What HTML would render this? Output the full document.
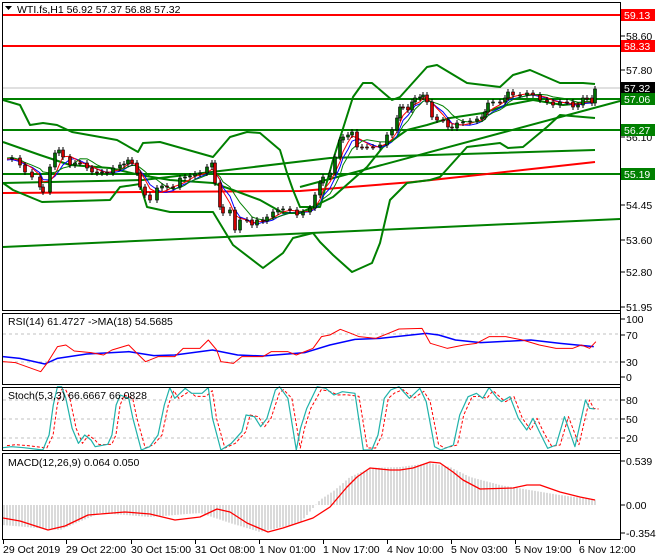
<!DOCTYPE html>
<html><head><meta charset="utf-8"><style>
html,body{margin:0;padding:0;background:#fff;width:660px;height:560px;overflow:hidden}
svg{display:block;font-family:"Liberation Sans",sans-serif;font-size:10.5px}
</style></head><body>
<svg id="s" width="660" height="560" viewBox="0 0 660 560" xmlns="http://www.w3.org/2000/svg">
<rect width="660" height="560" fill="#fff"/>
<g id="g"></g>
<g fill="none" stroke="#000" stroke-width="1">
<rect x="2.5" y="2.5" width="618" height="308"/>
<rect x="2.5" y="313.5" width="618" height="71"/>
<rect x="2.5" y="387.5" width="618" height="63"/>
<rect x="2.5" y="453.5" width="618" height="86"/>
</g>
<g fill="#000">
<text x="17" y="13">WTI.fs,H1  56.92 57.37 56.88 57.32</text>
<path d="M5 6h7l-3.5 4z"/>
<text x="8" y="325">RSI(14) 61.4727  -&gt;MA(18) 54.5685</text>
<text x="8" y="399">Stoch(5,3,3) 66.6667 66.0828</text>
<text x="8" y="466">MACD(12,26,9) 0.064 0.050</text>
</g>
<g id="ax" fill="#000"></g>
</svg>
<script>
var g=document.getElementById('g'),ax=document.getElementById('ax'),NS='http://www.w3.org/2000/svg';
function el(p,t,a){var e=document.createElementNS(NS,t);for(var k in a)e.setAttribute(k,a[k]);p.appendChild(e);return e}
function pl(pts,c,w,d){var a={points:pts.map(function(p){return p[0]+','+p[1]}).join(' '),fill:'none',stroke:c,'stroke-width':w||1,'stroke-linejoin':'round'};if(d)a['stroke-dasharray']=d;return el(g,'polyline',a)}
function ln(x1,y1,x2,y2,c,w,d){var a={x1:x1,y1:y1,x2:x2,y2:y2,stroke:c,'stroke-width':w||1};if(d)a['stroke-dasharray']=d;el(g,'line',a)}
var G='#008000',R='#ff0000';
ln(3,15,620,15,R,2);ln(3,46,620,46,R,2);ln(3,88,620,88,'#c0c0c0',1);
ln(3,99,620,99,G,2);ln(3,130,620,130,G,2);ln(3,174,620,174,G,2);
pl([[3,247],[620,219]],G,2);
pl([[3,183],[143,180],[330,158],[595,150]],G,2);
pl([[300,187],[620,101]],G,2);
pl([[3,193],[300,191],[413,182],[487,174],[595,162]],R,2);
pl([[3,100],[20,105],[30,125],[43,123],[57,125],[72,132],[117,140],[138,152],[143,143],[160,142],[213,157],[230,137],[247,132],[260,133],[280,150],[287,173],[293,190],[300,207],[320,207],[333,160],[353,97],[363,83],[372,83],[392,100],[400,97],[427,67],[437,65],[467,83],[500,87],[513,75],[530,70],[560,83],[583,83],[595,84]],G,2);
pl([[3,142],[40,155],[70,165],[110,168],[140,175],[170,180],[213,183],[233,190],[260,200],[283,213],[300,213],[333,197],[367,167],[383,147],[407,130],[427,125],[450,118],[483,113],[507,105],[533,100],[563,105],[595,102]],G,2);
pl([[3,183],[13,190],[42,202],[110,200],[120,187],[140,184],[147,207],[170,212],[213,212],[233,245],[263,268],[283,253],[293,238],[313,233],[320,242],[333,255],[352,272],[372,263],[380,243],[390,200],[407,183],[430,180],[440,177],[467,147],[500,143],[508,148],[523,147],[547,127],[560,115],[583,117],[595,118]],G,2);
var P=[[7,159],[12,158],[20,165],[25,172],[32,177],[40,187],[43,192],[50,167],[55,153],[59,150],[63,157],[70,165],[75,163],[80,163],[87,168],[92,172],[97,173],[102,172],[107,173],[113,168],[120,165],[124,164],[128,160],[132,163],[137,173],[140,187],[145,195],[150,200],[157,188],[162,186],[167,187],[173,187],[180,178],[185,177],[190,176],[195,174],[200,173],[207,167],[212,163],[215,183],[220,207],[223,213],[230,210],[235,230],[240,220],[247,220],[252,225],[257,220],[263,221],[267,217],[273,212],[278,210],[283,209],[290,210],[297,215],[303,212],[310,208],[315,195],[320,183],[323,177],[330,173],[335,157],[340,140],[343,137],[348,135],[352,132],[357,147],[362,147],[367,147],[373,147],[380,145],[387,135],[392,130],[397,118],[400,107],[403,107],[408,110],[412,102],[415,98],[420,97],[423,95],[427,102],[432,117],[437,120],[443,120],[448,127],[452,128],[457,123],[463,122],[470,121],[477,119],[482,117],[485,112],[488,103],[493,102],[500,102],[505,98],[508,92],[513,95],[520,95],[527,93],[533,95],[540,100],[547,102],[553,105],[560,102],[567,102],[573,107],[578,105],[583,98],[587,98],[592,103],[595,89]];
function shift(a,dy,k){var o=[];for(var i=0;i<a.length;i++){var s=0,n=0;for(var j=Math.max(0,i-k);j<=i;j++){s+=a[j][1];n++}o.push([a[i][0],s/n+dy])}return o}
pl(shift(P,1,4),'#0000ff',1);pl(shift(P,0,3),R,1);pl(shift(P,-1,6),G,1);
for(var i=1;i<P.length;i++){var x=P[i][0],o=P[i-1][1],c=P[i][1],t=Math.min(o,c),b=Math.max(o,c);
ln(x,t-3,x,b+3,'#000',1);
el(g,'rect',{x:x-1.5,y:t,width:3,height:Math.max(b-t,1),fill:c<o?'#007000':'#d00000',stroke:'#000','stroke-width':0.6});}
ln(3,334,620,334,'#c0c0c0',1,'3,3');ln(3,362,620,362,'#c0c0c0',1,'3,3');
function cv(a,ox,oy){return a.map(function(p){return [p[0]*0.419+3,oy+p[1]/3]})}
pl(cv([[0,200],[40,205],[100,222],[130,205],[200,192],[300,185],[360,197],[410,195],[500,180],[560,195],[620,198],[720,188],[780,165],[840,148],[900,145],[1010,130],[1040,135],[1080,150],[1140,158],[1260,150],[1330,160],[1410,170]],0,290),'#0000ff',1.5);
pl(cv([[0,215],[30,218],[90,245],[105,220],[130,170],[150,165],[170,183],[210,188],[240,195],[260,180],[300,165],[320,190],[340,215],[370,200],[410,200],[430,175],[470,175],[490,150],[510,180],[520,215],[550,220],[570,200],[620,200],[640,185],[680,185],[700,195],[740,175],[760,140],[780,135],[805,118],[830,130],[850,140],[890,145],[920,130],[945,117],[1000,115],[1020,160],[1060,175],[1100,165],[1130,160],[1160,140],[1200,140],[1240,150],[1280,165],[1320,175],[1360,175],[1380,165],[1400,175],[1415,155]],0,290),R,1);
ln(3,400,620,400,'#c0c0c0',1,'3,3');ln(3,419,620,419,'#c0c0c0',1,'3,3');ln(3,438,620,438,'#c0c0c0',1,'3,3');
var S=cv([[0,188],[20,185],[50,188],[95,195],[110,150],[120,60],[130,5],[140,5],[150,40],[165,130],[180,175],[195,150],[210,165],[220,185],[250,178],[260,150],[270,60],[280,30],[300,40],[310,100],[330,195],[350,185],[370,150],[385,60],[398,8],[410,40],[435,10],[450,25],[475,25],[490,8],[500,100],[520,195],[545,175],[570,140],[580,90],[600,95],[615,125],[630,100],[650,15],[660,5],[680,40],[700,195],[710,130],[725,70],[750,5],[770,10],[790,30],[810,20],[840,25],[860,195],[880,195],[895,150],[910,40],[925,15],[945,5],[970,40],[995,10],[1010,50],[1030,185],[1045,195],[1075,180],[1090,90],[1110,35],[1130,25],[1145,40],[1160,8],[1180,40],[1190,50],[1210,35],[1230,100],[1250,135],[1265,100],[1280,140],[1300,190],[1320,180],[1340,95],[1365,185],[1390,45],[1400,70],[1412,72]],0,385);
pl(S.map(function(p){return [p[0]+4,p[1]+(p[1]<395?3:p[1]>445?-2:0)]}),R,1,'3,2');
pl(S,'#20b2aa',1.2);
var hz=[[3,20],[60,25],[100,8],[150,12],[200,8],[230,18],[260,27],[300,18],[320,-5],[335,-15],[350,-28],[370,-37],[400,-38],[430,-42],[450,-38],[470,-28],[500,-20],[530,-15],[560,-10],[597,-5]];
function hv(x){for(var i=1;i<hz.length;i++)if(x<=hz[i][0]){var a=hz[i-1],b=hz[i];return a[1]+(b[1]-a[1])*(x-a[0])/(b[0]-a[0])}return -5}
for(var x=4;x<=597;x+=3){var v=hv(x);ln(x,505,x,505+v,'#b4b4b4',1)}
pl([[3,518],[20,521],[48,530],[65,526],[88,515],[125,512],[150,514],[175,520],[200,517],[217,509],[230,512],[247,523],[268,532],[283,528],[313,518],[330,507],[347,487],[357,477],[370,468],[390,470],[400,470],[413,468],[430,462],[440,463],[453,472],[463,480],[480,489],[513,488],[527,485],[540,485],[560,492],[580,497],[595,500]],R,1.3);
ln(620.5,2,620.5,540,'#000',1);
function lab(y,t){ln(621,y,625,y,'#000',1);el(ax,'text',{x:626,y:y+4}).textContent=t}
[[36,'58.60'],[70,'57.80'],[137,'56.10'],[205,'54.45'],[240,'53.60'],[272,'52.80'],[307,'51.95'],[319,'100'],[335,'70'],[362,'30'],[377,'0'],[400,'80'],[419,'50'],[438,'20'],[461,'0.539'],[505,'0.00'],[533,'-0.354']].forEach(function(a){lab(a[0],a[1])});
function box(y,t,bg){el(ax,'rect',{x:621,y:y-6,width:34,height:12,fill:bg});var e=el(ax,'text',{x:624,y:y+4,fill:'#fff'});e.textContent=t}
box(15,'59.13',R);box(46,'58.33',R);box(88,'57.32','#000');box(99,'57.06',G);box(130,'56.27',G);box(174,'55.19',G);
[[3,'29 Oct 2019'],[66,'29 Oct 22:00'],[131,'30 Oct 15:00'],[195,'31 Oct 08:00'],[259,'1 Nov 01:00'],[323,'1 Nov 17:00'],[387,'4 Nov 10:00'],[451,'5 Nov 03:00'],[515,'5 Nov 19:00'],[579,'6 Nov 12:00']].forEach(function(a){ln(a[0]+0.5,540,a[0]+0.5,544,'#000',1);var e=el(ax,'text',{x:a[0],y:553});e.textContent=a[1]});
</script>
</body></html>
